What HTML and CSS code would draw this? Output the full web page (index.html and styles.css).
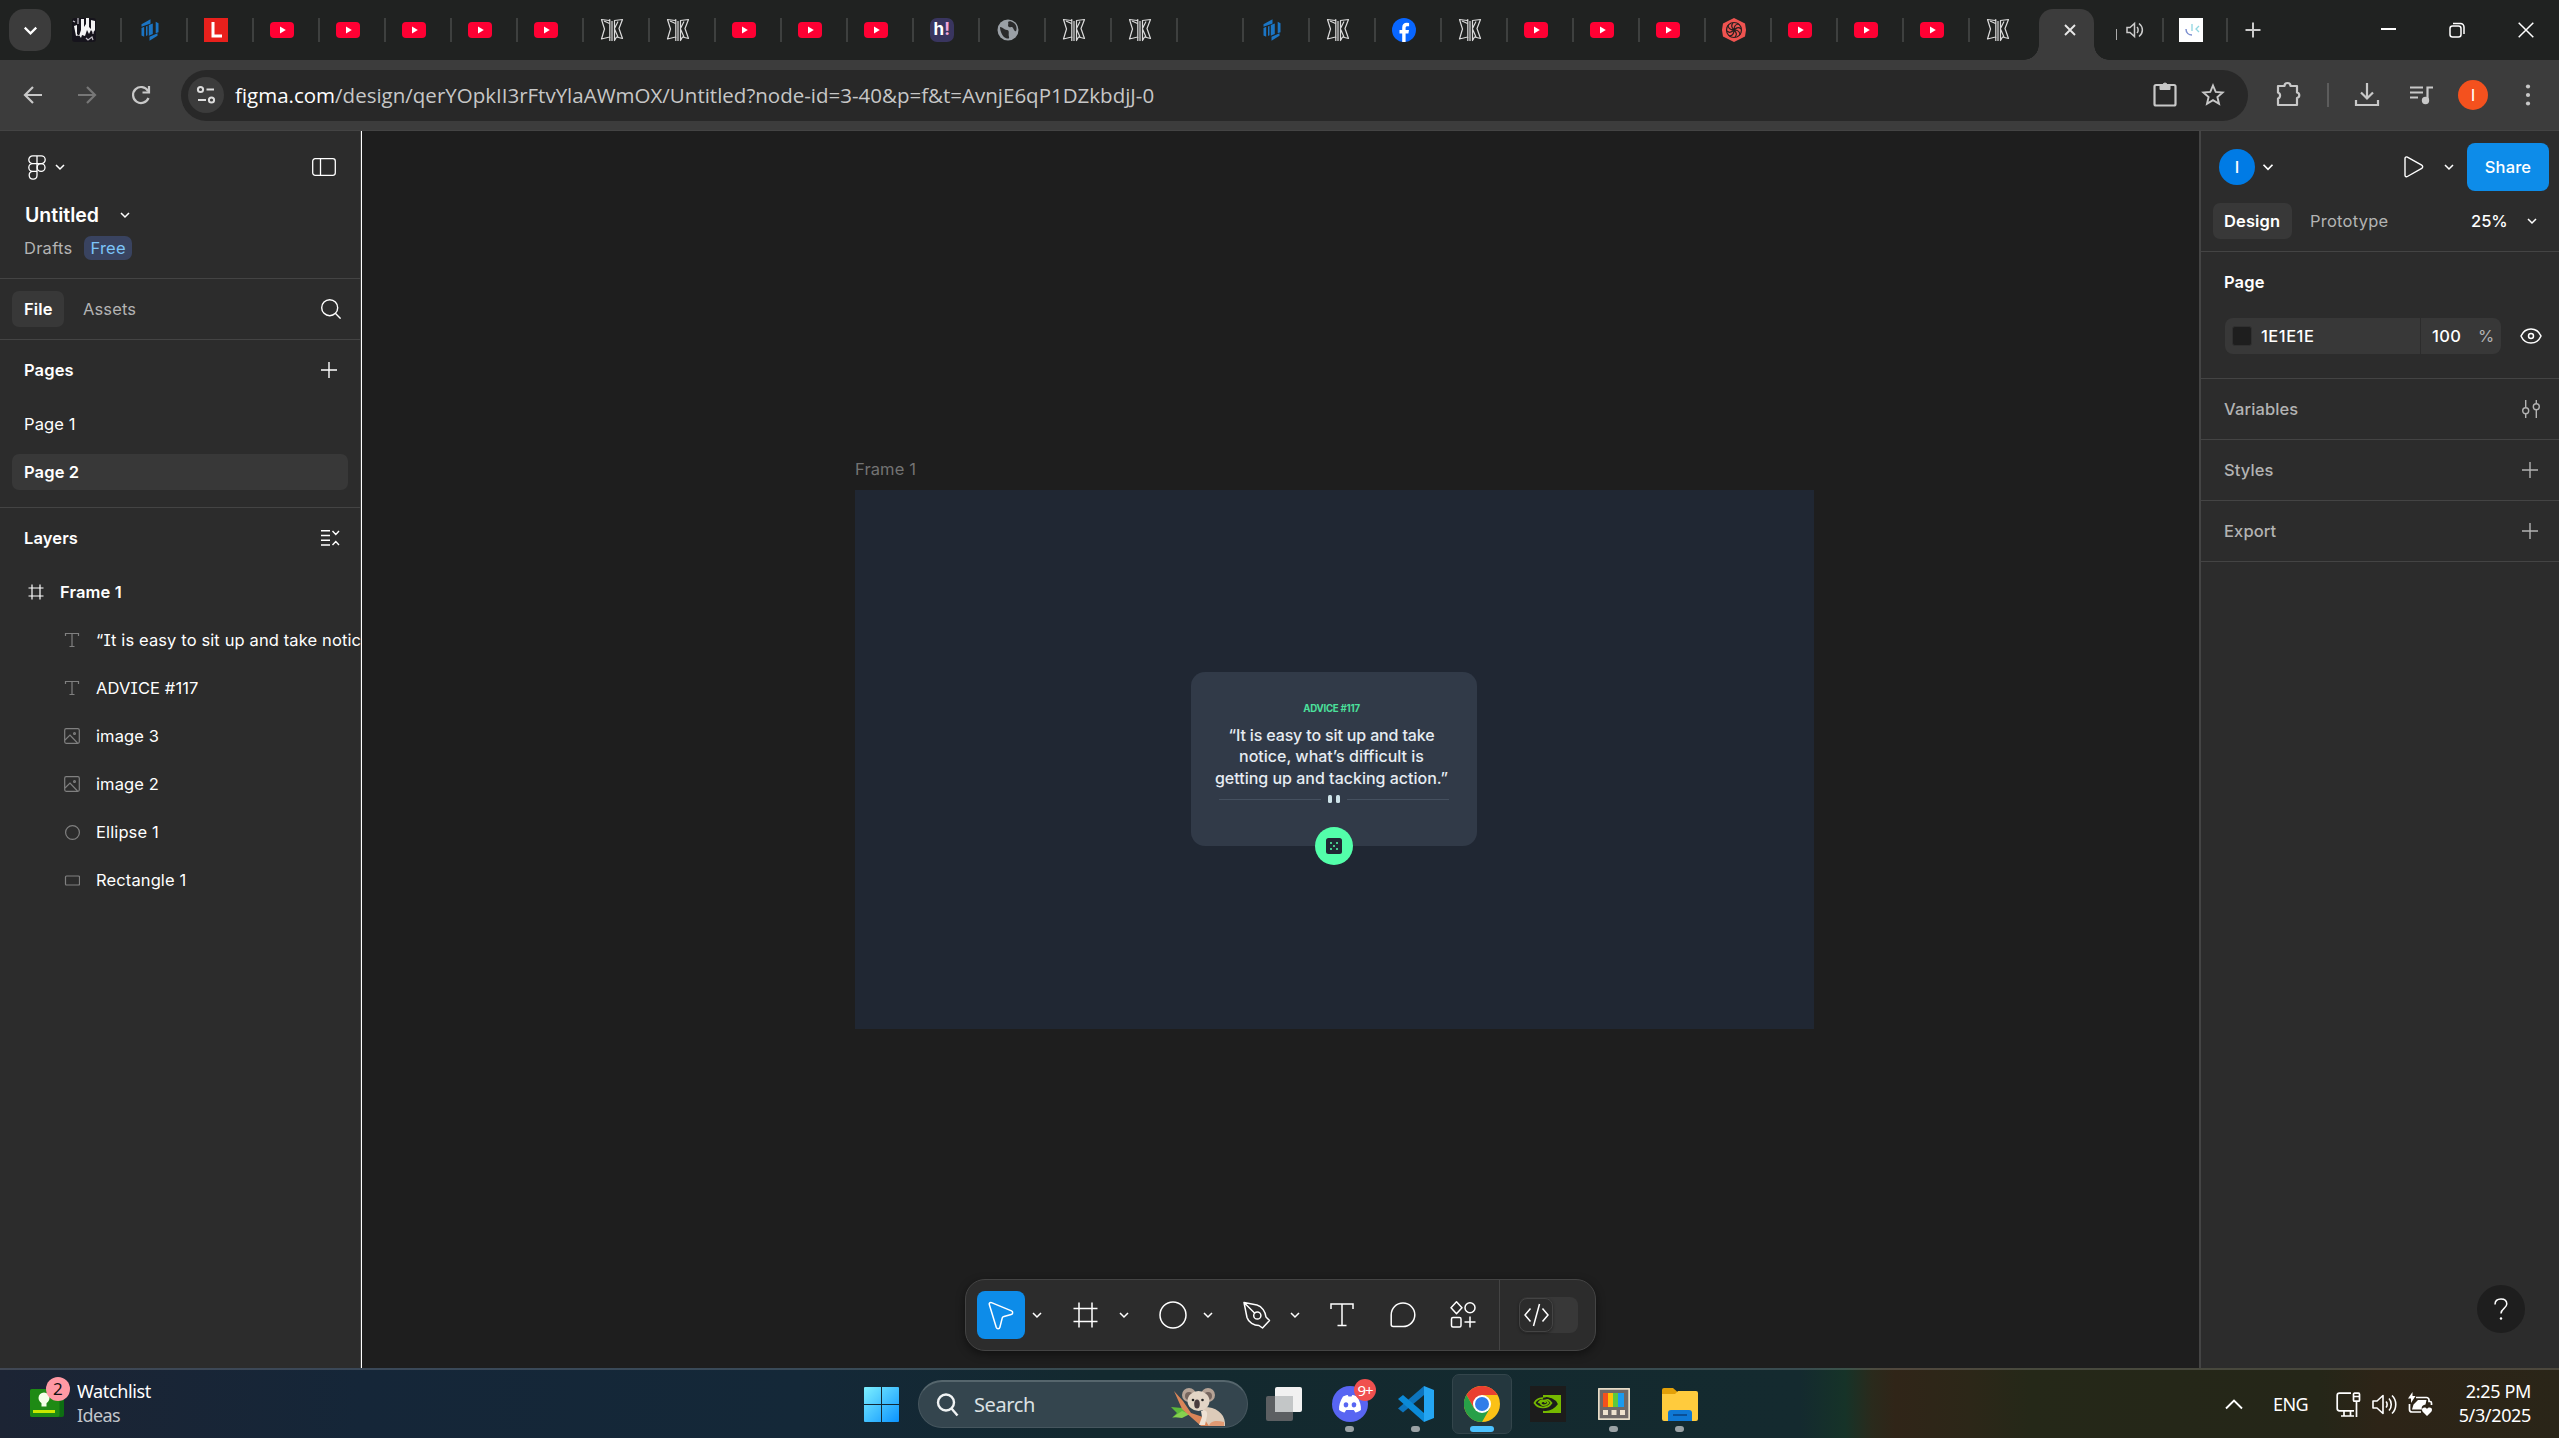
FILE: index.html
```html
<!DOCTYPE html>
<html lang="en">
<head>
<meta charset="utf-8">
<title>Untitled – Figma</title>
<link rel="stylesheet" href="styles.css">
</head>
<body>
<svg class="sprite" aria-hidden="true">
  <symbol id="yt" viewBox="0 0 24 24"><rect y="4" width="24" height="16" rx="4" fill="#ff0033"/><path d="M10 8.6v6.8l5.8-3.4z" fill="#fff"/></symbol>
  <symbol id="jk" viewBox="0 0 24 24"><g fill="none" stroke="#dcdcdc" stroke-width="1.200" stroke-linejoin="round"><path d="M1.500 1.500l7.500 1 .8-.8V19l-2.300.500-6 1.500L4.500 11z"/><path d="M14.500 10.500V2.500l8-1-3.500 9 3.500 10-6-1.500-2 3.500zM14.500 10.500l3.500-7M14.500 11l3.500 8"/><path d="M9.800 19v4M12 3v20M4 3l5.500 2.500"/></g></symbol>
  <symbol id="hex" viewBox="0 0 24 24"><g fill="#1b75c4"><path d="M3.500 10l2.700-1.200v10L3.500 17.500z"/><path d="M3.500 6.200L12.500 1.300v4.200l-9 3.300z"/><path d="M8 8.500l1.500-.8v9.500L8 18z"/><path d="M10.800 7l4-1.500v10.500l-4 1.700z"/><path d="M17.700 3.800l2.800 1.500v9l-2.800 1z"/><path d="M11.500 18.800l8-3.500v2.500l-8 5z"/></g></symbol>
  <symbol id="chev" viewBox="0 0 12 12"><path d="M3 4.500l3 3 3-3" fill="none" stroke="currentColor" stroke-width="1.150"/></symbol>
  <symbol id="plus" viewBox="0 0 18 18"><path d="M9 1v16M1 9h16" stroke="currentColor" stroke-width="1.400"/></symbol>
  <symbol id="hash" viewBox="0 0 16 16"><path d="M4 .5v15M12 .5v15M.5 4h15M.5 12h15" stroke="currentColor" fill="none" stroke-width="1.200"/></symbol>
  <symbol id="tee" viewBox="0 0 16 16"><path d="M1.500 4V1.500h13V4M8 1.500v13M5.500 14.500h5" stroke="currentColor" fill="none" stroke-width="1.200"/></symbol>
  <symbol id="image" viewBox="0 0 16 16"><g stroke="currentColor" fill="none" stroke-width="1.200"><rect x=".7" y=".7" width="14.600" height="14.600" rx="1.500"/><path d="M1 12l5-5 7.500 8"/><circle cx="10.500" cy="5.500" r=".9"/></g></symbol>
</svg>

<header class="tabstrip">
  <button class="tab-search"><svg width="23" height="23"><use href="#chev"/></svg></button>
  <div class="tabs">
    <div class="tab"><svg class="fav" viewBox="0 0 24 24"><rect width="24" height="24" rx="3" fill="#16141c"/><path d="M2 8l3-1v9l2 2 2-6V1h3v8l2-3V0h3v9l2 2V2l4 1v9l-2 3-2-3-2 4-2-4-2 6-3-1-1 3-2-3-3 1z" fill="#f4f4f4"/><path d="M1 3l2 1M6 0v6M21 13v3M14 20l2 2 4-3 1 3" stroke="#c5c0c8" stroke-width="1.200" fill="none"/></svg></div>
    <div class="tab"><svg class="fav"><use href="#hex"/></svg></div>
    <div class="tab"><svg class="fav" viewBox="0 0 24 24"><path fill="#e8201c" d="M0 0h24v24H0z"/><path d="M9 4v14h9" fill="none" stroke="#fff" stroke-width="3"/></svg></div>
    <div class="tab"><svg class="fav"><use href="#yt"/></svg></div>
    <div class="tab"><svg class="fav"><use href="#yt"/></svg></div>
    <div class="tab"><svg class="fav"><use href="#yt"/></svg></div>
    <div class="tab"><svg class="fav"><use href="#yt"/></svg></div>
    <div class="tab"><svg class="fav"><use href="#yt"/></svg></div>
    <div class="tab"><svg class="fav"><use href="#jk"/></svg></div>
    <div class="tab"><svg class="fav"><use href="#jk"/></svg></div>
    <div class="tab"><svg class="fav"><use href="#yt"/></svg></div>
    <div class="tab"><svg class="fav"><use href="#yt"/></svg></div>
    <div class="tab"><svg class="fav"><use href="#yt"/></svg></div>
    <div class="tab"><span class="fav hashnode">h<i>!</i></span></div>
    <div class="tab"><svg class="fav" viewBox="0 0 24 24"><circle cx="12" cy="12" r="10.500" fill="#9aa0a6"/><path d="M4 9c3 0 4 3 7 3s1 4 2 7-4 1-5 0-4-5-4-10zM12 4c1 2-1 4 1 5s3-1 4 1 2 4 3 3 1-6-2-8-5-2-6-1z" fill="#2a2b2c"/></svg></div>
    <div class="tab"><svg class="fav"><use href="#jk"/></svg></div>
    <div class="tab"><svg class="fav"><use href="#jk"/></svg></div>
    <div class="tab"><span class="fav"></span></div>
    <div class="tab"><svg class="fav"><use href="#hex"/></svg></div>
    <div class="tab"><svg class="fav"><use href="#jk"/></svg></div>
    <div class="tab"><svg class="fav" viewBox="0 0 24 24"><circle cx="12" cy="12" r="12" fill="#0866ff"/><path d="M10.200 24v-8.500H7.500V12h2.700V9.800c0-3.500 1.700-5 4.700-5l2.200.2v3.200h-1.500c-1.500 0-2 .6-2 2V12h3.400l-.6 3.500h-2.800V24z" fill="#fff"/></svg></div>
    <div class="tab"><svg class="fav"><use href="#jk"/></svg></div>
    <div class="tab"><svg class="fav"><use href="#yt"/></svg></div>
    <div class="tab"><svg class="fav"><use href="#yt"/></svg></div>
    <div class="tab"><svg class="fav"><use href="#yt"/></svg></div>
    <div class="tab"><svg class="fav" viewBox="0 0 24 24"><path d="M12 0l11 5.500 1 6.500-1 6.500L12 24 1 18.500 0 12l1-6.500z" fill="#ef5350"/><g fill="none" stroke="#26201f" stroke-width="1.200"><circle cx="12" cy="12" r="7.500"/><path d="M12 12c0-4 2-6 5-6M12 12c4 0 6 2 6 5M12 12c0 4-2 6-5 6M12 12c-4 0-6-2-6-5M12 12c-3-3-3-5-1-7M12 12c3-3 5-3 7-1M12 12c3 3 3 5 1 7M12 12c-3 3-5 3-7 1"/></g></svg></div>
    <div class="tab"><svg class="fav"><use href="#yt"/></svg></div>
    <div class="tab"><svg class="fav"><use href="#yt"/></svg></div>
    <div class="tab"><svg class="fav"><use href="#yt"/></svg></div>
    <div class="tab last"><svg class="fav"><use href="#jk"/></svg></div>
  </div>
  <div class="tab-active"><svg width="12" height="12" viewBox="0 0 12 12"><path d="M1 1l10 10M11 1L1 11" stroke="#e8e8e8" stroke-width="1.900"/></svg></div>
  <div class="tab-audio"><span class="sliver"></span><svg width="18" height="18" viewBox="0 0 18 18" fill="none" stroke="#ccc" stroke-width="1.500"><path d="M1 6.500h3l4.500-4v13l-4.500-4H1z"/><path d="M11 6c1.500 1.500 1.500 4.500 0 6M13 2.500c4.500 3.500 4.500 9.500 0 13"/></svg></div>
  <div class="tab-end"><svg class="fav" viewBox="0 0 24 24"><path fill="#fff" d="M0 0h24v24H0z"/><path d="M7 11c0 4 3 6 6 6" stroke="#7c8fd0" stroke-width="1.500" fill="none"/><path d="M13 6v7M20 8l-3 3 3 3" stroke="#8fd6e0" stroke-width="1.300" fill="none"/></svg></div>
  <svg class="newtab" width="18" height="18" viewBox="0 0 18 18"><path d="M9 1.500v15M1.500 9h15" stroke="#ccc" stroke-width="2"/></svg>
  <div class="wincontrols">
    <svg width="16" height="16" viewBox="0 0 16 16"><path d="M1 7h15" stroke="#fff" stroke-width="2"/></svg>
    <svg width="16" height="16" viewBox="0 0 16 16" fill="none" stroke="#fff" stroke-width="1.500"><rect x="1" y="4" width="11" height="11" rx="2.500"/><path d="M4 1.500h7.500a3.500 3.500 0 0 1 3.500 3.500V12"/></svg>
    <svg width="16" height="16" viewBox="0 0 16 16"><path d="M.7.700l14.600 14.600M15.300.700L.7 15.300" stroke="#fff" stroke-width="1.500"/></svg>
  </div>
</header>

<nav class="toolbar">
  <svg class="nav-i" viewBox="0 0 20 20"><path d="M19 10H2.500M10 2l-8 8 8 8" /></svg>
  <svg class="nav-i dim" viewBox="0 0 20 20"><path d="M1 10h16.500M10 2l8 8-8 8" /></svg>
  <svg class="nav-i" viewBox="0 0 20 20"><path d="M17.500 13A8 8 0 1 1 17 6M18 1v6.500h-6.500"/></svg>
  <div class="omnibox">
    <span class="siteinfo"><svg width="20" height="20" viewBox="0 0 20 20" fill="none" stroke="#dcdcdc" stroke-width="2"><circle cx="4.500" cy="4.500" r="2.600"/><path d="M10.500 4.500H18M2 15h8"/><circle cx="15.500" cy="15" r="2.600"/></svg></span>
    <span class="url"><b>figma.com</b>/design/qerYOpkII3rFtvYlaAWmOX/Untitled?node-id=3-40&amp;p=f&amp;t=AvnjE6qP1DZkbdjJ-0</span>
    <svg class="clip" width="24" height="26" viewBox="0 0 24 26" fill="none" stroke="#c8c8c8" stroke-width="2.200"><rect x="1.500" y="4" width="21" height="20.500" rx="1.500"/><path d="M7 4h3a2 2 0 0 1 4 0h3v4.500H7z" fill="#c8c8c8" stroke-width="1"/></svg>
    <svg width="24" height="24" viewBox="0 0 24 24" fill="none" stroke="#c8c8c8" stroke-width="1.900"><path d="M12 2.500l2.700 6.400 6.900.6-5.200 4.500 1.600 6.800-6-3.600-6 3.600 1.600-6.800-5.200-4.500 6.900-.6z"/></svg>
  </div>
  <svg class="puzzle" width="26" height="26" viewBox="0 0 26 26" fill="none" stroke="#c8c8c8" stroke-width="2.200"><path d="M2 5h6.500a3 3 0 0 1 6 0H21v6.500a2.800 2.800 0 0 1 0 5.500v7H2v-6.500a3.200 3.200 0 0 0 0-6z" stroke-linejoin="round"/></svg>
  <span class="tsep"></span>
  <svg class="dl" width="26" height="26" viewBox="0 0 26 26" fill="none" stroke="#c8c8c8" stroke-width="2.200"><path d="M13 1v15M7 10.500l6 6 6-6M2 18v5h22v-5"/></svg>
  <svg class="media" width="24" height="20" viewBox="0 0 24 20" fill="none" stroke="#c8c8c8" stroke-width="2.200"><path d="M1 2.500h13M1 7.500h13M1 12.500h8"/><path d="M18.500 16V2.500H24"/><circle cx="16.500" cy="15.500" r="2.600" fill="#c8c8c8"/></svg>
  <span class="profile">I</span>
  <svg class="dots" width="6" height="22" viewBox="0 0 6 22" fill="#c8c8c8"><circle cx="3" cy="2.500" r="2.100"/><circle cx="3" cy="11" r="2.100"/><circle cx="3" cy="19.500" r="2.100"/></svg>
</nav>

<main class="app">
  <aside class="left">
    <div class="l-top">
      <svg width="18" height="25" viewBox="0 0 18 25" fill="none" stroke="#fff" stroke-width="1.300"><path d="M9 .8H4.700a3.900 3.900 0 0 0 0 7.800H9zM9 .8h4.300a3.900 3.900 0 0 1 0 7.800H9zM9 8.600H4.700a3.900 3.900 0 0 0 0 7.800H9zM9 16.400H4.700a3.900 3.900 0 1 0 4.300 3.900z"/><circle cx="13.100" cy="12.500" r="3.900"/></svg>
      <svg class="c" width="16" height="16"><use href="#chev"/></svg>
      <svg class="push" width="24" height="18" viewBox="0 0 24 18" fill="none" stroke="#fff" stroke-width="1.300"><rect x=".7" y=".7" width="22.600" height="16.600" rx="2.500"/><path d="M8.500 1v16"/></svg>
    </div>
    <div class="l-title"><strong>Untitled</strong><svg width="16" height="16"><use href="#chev"/></svg></div>
    <div class="l-sub"><span>Drafts</span><em>Free</em></div>
    <div class="l-tabs"><span class="on">File</span><span>Assets</span>
      <svg class="push" width="20" height="20" viewBox="0 0 20 20" fill="none" stroke="#fff" stroke-width="1.400"><circle cx="8.700" cy="8.700" r="8"/><path d="M14.300 14.300l5.300 5.300"/></svg></div>
    <div class="l-head"><b>Pages</b><svg class="push" width="18" height="18"><use href="#plus"/></svg></div>
    <div class="page">Page 1</div>
    <div class="page sel">Page 2</div>
    <div class="l-head layers"><b>Layers</b><svg class="push" width="19" height="16" viewBox="0 0 19 16" fill="none" stroke="#fff" stroke-width="1.400"><path d="M0 .8h9M0 5.500h9M0 10.300h9M0 15h9M11.500 1l3.300 3.500L18 1M11.500 15l3.300-3.500L18 15"/></svg></div>
    <div class="layer top"><svg width="16" height="16"><use href="#hash"/></svg><b>Frame 1</b></div>
    <div class="layer"><svg width="16" height="16"><use href="#tee"/></svg><span>“It is easy to sit up and take notic</span></div>
    <div class="layer"><svg width="16" height="16"><use href="#tee"/></svg><span>ADVICE #117</span></div>
    <div class="layer"><svg width="16" height="16"><use href="#image"/></svg><span>image 3</span></div>
    <div class="layer"><svg width="16" height="16"><use href="#image"/></svg><span>image 2</span></div>
    <div class="layer"><svg width="16" height="16" viewBox="0 0 16 16"><circle cx="8.500" cy="8.500" r="6.900" fill="none" stroke="currentColor" stroke-width="1.200"/></svg><span>Ellipse 1</span></div>
    <div class="layer"><svg width="16" height="16" viewBox="0 0 16 16"><rect x="1.500" y="4" width="14" height="9" rx="1" fill="none" stroke="currentColor" stroke-width="1.200"/></svg><span>Rectangle 1</span></div>
  </aside>

  <section class="canvas">
    <span class="frame-label">Frame 1</span>
    <div class="frame">
      <div class="card">
        <div class="advice">ADVICE #117</div>
        <div class="quote"><span class="q1">“It is easy to sit up and take</span><span class="q2">notice, what’s difficult is</span><span class="q3">getting up and tacking action.”</span></div>
        <div class="divider"><hr><i></i><i></i><hr></div>
        <div class="dice"><svg width="16" height="16" viewBox="0 0 16 16"><rect width="16" height="16" rx="2.500" fill="#202733"/><g fill="#53ffaa"><circle cx="5" cy="5" r="1"/><circle cx="11" cy="5" r="1"/><circle cx="8" cy="8" r="1"/><circle cx="5" cy="11" r="1"/><circle cx="11" cy="11" r="1"/></g></svg></div>
      </div>
    </div>
    <div class="tools">
      <span class="tool active"><svg width="28" height="34" viewBox="0 0 28 34"><path d="M2.300 4.600c-.5-1.400.8-2.600 2.200-2l20 8.300c1.700.8 1.500 3.100-.3 3.600l-7.200 1.900c-.9.300-1.500.8-1.800 1.700l-2.300 9.100c-.5 1.900-2.900 2-3.600.3z" transform="translate(0 2)" fill="none" stroke="#fff" stroke-width="1.500"/></svg></span>
      <svg class="tc" width="16" height="16"><use href="#chev"/></svg>
      <svg class="t-frame" width="25" height="30" viewBox="0 0 25 30" fill="none" stroke="#fff" stroke-width="1.500"><path d="M6 2.500v25M19 2.500v25M.5 8.500h24M.5 21.500h24"/></svg>
      <svg class="tc" width="16" height="16"><use href="#chev"/></svg>
      <svg class="t-ell" width="28" height="28" viewBox="0 0 28 28"><circle cx="14" cy="14" r="13" fill="none" stroke="#fff" stroke-width="1.500"/></svg>
      <svg class="tc" width="16" height="16"><use href="#chev"/></svg>
      <svg class="t-pen" width="28" height="28" viewBox="0 0 28 28" fill="none" stroke="#fff" stroke-width="1.500" stroke-linejoin="round"><path d="M1 1.500l13 2.500c5 1.300 8.500 7 9 12l3.500 3.500-7 7.500-3.500-2.500c-5 0-10.500-3-12-8zM1 1.500l11 11"/><circle cx="14.300" cy="14.500" r="3.600"/></svg>
      <svg class="tc" width="16" height="16"><use href="#chev"/></svg>
      <svg class="t-text" width="24" height="24" viewBox="0 0 24 24" fill="none" stroke="#fff" stroke-width="1.500"><path d="M1 6V1h22v5M12 1v21.500M7.500 22.500h9"/></svg>
      <svg class="t-com" width="26" height="26" viewBox="0 0 26 26"><path d="M13 1a11.800 11.800 0 1 1 0 23.600H3.200A2 2 0 0 1 1.200 22.600V13A11.800 11.800 0 0 1 13 1z" fill="none" stroke="#fff" stroke-width="1.500"/></svg>
      <svg class="t-cmp" width="26" height="28" viewBox="0 0 26 28" fill="none" stroke="#fff" stroke-width="1.500"><path d="M6.500.8L12 6.700l-5.500 6L1 6.700z" stroke-linejoin="round"/><circle cx="20" cy="6.800" r="5"/><rect x="1.500" y="16.500" width="9.500" height="9.500" rx="1.500"/><path d="M20 15.500v11M14.500 21h11"/></svg>
      <span class="t-sep"></span>
      <span class="dev"><span class="knob"><svg width="25" height="24" viewBox="0 0 25 24" fill="none" stroke="#fff" stroke-width="1.500"><path d="M6.500 5.500L1 12l5.500 6.500M18.500 5.500L24 12l-5.500 6.500M15.500 1l-6 22"/></svg></span></span>
    </div>
  </section>

  <aside class="right">
    <div class="r-top"><span class="avatar">I</span><svg class="ca" width="18" height="18"><use href="#chev"/></svg>
      <svg class="play" width="20" height="22" viewBox="0 0 20 22"><path d="M1 2.500c0-1.300 1.300-2 2.400-1.400l14.300 8c1.300.8 1.300 2.400 0 3.200l-14.300 8.200C2.300 21.100 1 20.400 1 19.200z" fill="none" stroke="#fff" stroke-width="1.400"/></svg>
      <svg class="cp" width="16" height="16"><use href="#chev"/></svg><span class="share">Share</span></div>
    <div class="r-tabs"><span class="on">Design</span><span class="proto">Prototype</span><span class="zoom">25%</span><svg width="16" height="16"><use href="#chev"/></svg></div>
    <div class="r-head"><b>Page</b></div>
    <div class="r-fill"><div class="field"><i class="swatch"></i><span class="hex">1E1E1E</span><span class="op">100</span><span class="pc">%</span></div>
      <svg width="22" height="16" viewBox="0 0 22 16" fill="none" stroke="#fff" stroke-width="1.500"><path d="M1 8C3 3.500 6.500 1 11 1s8 2.500 10 7c-2 4.500-5.500 7-10 7S3 12.500 1 8z"/><circle cx="11" cy="8" r="2.500"/></svg></div>
    <div class="r-row">Variables<svg class="vars" width="18" height="18" viewBox="0 0 18 18" fill="none" stroke="currentColor" stroke-width="1.400"><path d="M3.700 0v7.500M3.700 14v4M14.300 0v3.500M14.300 10v8"/><circle cx="3.700" cy="10.800" r="3"/><circle cx="14.300" cy="6.700" r="3"/></svg></div>
    <div class="r-row">Styles<svg width="18" height="18"><use href="#plus"/></svg></div>
    <div class="r-row">Export<svg width="18" height="18"><use href="#plus"/></svg></div>
    <div class="help"><svg width="16" height="24" viewBox="0 0 16 24"><path d="M2 7.500C2 4 4.500 2 8 2s5.800 2 5.800 5c0 4.300-5.800 4.500-5.800 9.500" fill="none" stroke="#fff" stroke-width="1.500"/><circle cx="8" cy="21.500" r="1.200" fill="#fff"/></svg></div>
  </aside>
</main>

<footer class="taskbar">
  <div class="widget">
    <div class="w-icon"><svg width="34" height="28" viewBox="0 0 34 28"><rect width="34" height="28" rx="2" fill="#0d6e12"/><rect width="29.500" height="28" rx="2" fill="#1e8a14"/><path d="M3 22.500h22" stroke="#c8e800" stroke-width="3"/><circle cx="14" cy="9" r="5.500" fill="#f4ffe8"/><path d="M11.500 12h5v5.500h-5z" fill="#f4ffe8"/></svg><span class="w-badge">2</span></div>
    <div class="w-text"><span>Watchlist</span><small>Ideas</small></div>
  </div>
  <div class="apps">
    <svg class="win" width="35" height="35" viewBox="0 0 35 35"><defs><linearGradient id="wg" x2="1" y2="1"><stop stop-color="#7df0ff"/><stop offset="1" stop-color="#0a93ff"/></linearGradient></defs><path d="M1 0h16v17H0V1a1 1 0 0 1 1-1zM18 0h16a1 1 0 0 1 1 1v16H18zM0 18h17v17H1a1 1 0 0 1-1-1zM18 18h17v16a1 1 0 0 1-1 1H18z" fill="url(#wg)"/></svg>
    <div class="search"><svg width="23" height="24" viewBox="0 0 23 24" fill="none" stroke="#f0f3f4" stroke-width="2.400"><circle cx="10" cy="9.500" r="8"/><path d="M15.500 15.500l6 7"/></svg><span>Search</span>
      <svg class="koala" width="54" height="38" viewBox="0 0 54 38"><path d="M0 19l11 1 7 6-9 2-8 2 5-5z" fill="#5cb83a"/><path d="M2 29l9-6 8 3-8 4z" fill="#85d04e"/><path d="M31 19c13-1 24 6 23 19H30l4-8z" fill="#dccbb9"/><path d="M3 3l9 10 8 12 12 4 6 9h-8l-9-8-10-9z" fill="#d98558"/><circle cx="18" cy="7" r="7" fill="#b6a396"/><circle cx="37" cy="7" r="7" fill="#b6a396"/><circle cx="18" cy="8" r="4" fill="#76665f"/><circle cx="37" cy="8" r="4" fill="#76665f"/><ellipse cx="27.500" cy="13" rx="11" ry="10" fill="#e3d5c6"/><ellipse cx="26" cy="16" rx="2.800" ry="4.500" fill="#4a3c40"/><circle cx="22" cy="12" r="1.300" fill="#222"/><circle cx="31.500" cy="12" r="1.300" fill="#222"/><path d="M30 23c4-2 7 0 6 5l-2 9h-6l3-8z" fill="#eee2d4"/><path d="M38 38c1-5 7-6 15-4v4z" fill="#e29a73"/></svg></div>
    <svg class="tv" width="36" height="34" viewBox="0 0 36 34"><rect y="9" width="27" height="25" rx="2" fill="#5c5f62"/><rect x="9" width="27" height="25" rx="2" fill="#f1f1f1"/><path d="M9 9h18v16H9z" fill="#c3c6c7"/></svg>
    <div class="app discord"><svg width="36" height="36" viewBox="0 0 36 36"><circle cx="18" cy="18" r="18" fill="#5865f2"/><path d="M11 10.500c3-1.300 4-1.400 4.700-1.500l.8 1.500h3l.8-1.500c.7.100 1.700.2 4.700 1.500 3 4.500 4.300 9.500 3.900 13.500-2 1.500-4 2.400-5.500 2.600l-1.600-2.600h-7.600l-1.600 2.600c-1.500-.2-3.500-1.100-5.500-2.600-.4-4 .9-9 3.900-13.500z" fill="#fff"/><ellipse cx="14" cy="18.800" rx="2.300" ry="2.600" fill="#5865f2"/><ellipse cx="22" cy="18.800" rx="2.300" ry="2.600" fill="#5865f2"/></svg><span class="d-badge">9+</span><u></u></div>
    <div class="app vscode"><svg width="36" height="36" viewBox="0 0 36 36"><path d="M26 0l10 4v28l-10 4z" fill="#24a5f2"/><path d="M26 0v9L5 26.500l-5-4z" fill="#0d74bd"/><path d="M0 13l5-4 21 18v9z" fill="#0b8ad8"/></svg><u></u></div>
    <div class="app chrome"><svg width="36" height="36" viewBox="0 0 36 36"><circle cx="18" cy="18" r="18" fill="#fbc116"/><path d="M18 9h15.600A18 18 0 0 0 2.400 9L10 22z" fill="#ea3f30"/><path d="M2.400 9a18 18 0 0 0 15.600 27l7.800-13.500L18 18l-7.800 4.500z" fill="#27a048"/><circle cx="18" cy="18" r="9" fill="#fff"/><circle cx="18" cy="18" r="7" fill="#2f7de9"/></svg><u></u></div>
    <svg class="nv" width="36" height="36" viewBox="0 0 36 36"><path fill="#1c1c1c" d="M0 0h36v36H0z"/><path d="M13 9h18v18H13z" fill="#76b900"/><path d="M4 17c4-7 16-9 23 1-6 8-16 9-23-1z" fill="#1c1c1c"/><g fill="none" stroke="#76b900" stroke-width="1.700"><path d="M4.500 17c3-6 12-7 17 0-4 6-13 6-17 0z"/><path d="M8.500 17c2-4 8-4 10 0-3 3-7 3-8 0 1-2 4-3 5 0"/></g><path d="M13 13c7-2 12 1 14 5-3 4-8 7-14 6" fill="none" stroke="#1c1c1c" stroke-width="1.500"/></svg>
    <div class="app dev1"><svg width="32" height="32" viewBox="0 0 32 32"><rect x=".7" y=".7" width="30.600" height="30.600" rx="1" fill="#6f6967" stroke="#e6dcc8" stroke-width="2"/><path d="M5 5h6v14H5z" fill="#f4511e"/><path d="M10 5h5v14h-5z" fill="#ffc107"/><path d="M15 5h5v14h-5z" fill="#5cc93c"/><path d="M20 5h6v14h-6z" fill="#1b9bf0"/><path d="M5 22h5v5H5zM13.500 22h5v5h-5zM22 22h5v5h-5z" fill="#efe3cf"/></svg><u></u></div>
    <div class="app files"><svg width="36" height="33" viewBox="0 0 36 33"><path d="M0 2a2 2 0 0 1 2-2h9l4 3.500V9H0z" fill="#e3a008"/><path d="M0 6h13l3-3h18a2 2 0 0 1 2 2v26a2 2 0 0 1-2 2H2a2 2 0 0 1-2-2z" fill="#ffcb3d"/><path d="M6 33v-8a3 3 0 0 1 3-3h18a3 3 0 0 1 3 3v8z" fill="#0f78d4"/><path d="M11 27h14" stroke="#0a4f96" stroke-width="2"/></svg><u></u></div>
  </div>
  <div class="tray">
    <svg width="18" height="11" viewBox="0 0 18 11"><path d="M1 9.500l8-8 8 8" fill="none" stroke="#fff" stroke-width="1.900"/></svg>
    <span class="lang">ENG</span>
    <svg class="net" width="25" height="25" viewBox="0 0 25 25" fill="none" stroke="#fff" stroke-width="1.700"><path d="M15 1.200H3.500a2.300 2.300 0 0 0-2.300 2.300v13a2.300 2.300 0 0 0 2.300 2.300H18M8 19v4.500M14.500 19v4.500M5 24h13"/><rect x="17.500" y="1.200" width="6" height="8" rx="1"/><path d="M20.500 9.500V25M17.500 4.500h6"/></svg>
    <svg class="vol" width="25" height="21" viewBox="0 0 25 21" fill="none" stroke="#fff" stroke-width="1.600"><path d="M1 7h4l6-5.500v18L5 14H1z" stroke-linejoin="round"/><path d="M14 7.500c1.500 1.500 1.500 4.500 0 6M17 4.500c3 3 3 9 0 12M20 1.500c5 4.500 5 13.500 0 18"/></svg>
    <svg class="bat" width="25" height="24" viewBox="0 0 25 24"><path d="M8 5.500h10.500a2.500 2.500 0 0 1 2.500 2.500v1.500h1a1.500 1.500 0 0 1 1.500 1.500v2M1.500 12v5.500A2.500 2.500 0 0 0 4 20h9" fill="none" stroke="#fff" stroke-width="1.700"/><path d="M10 8h8.500l-1 4.500c-3 .5-4.500 2.500-3.500 5H4l1.500-5zM4.500 0v4h3L3 11V6.500H0zM19 24l-4.500-4.500c-2-3.500 2.500-5.500 4.500-2.500 2-3 6.500-1 4.500 2.500z" fill="#fff"/></svg>
    <div class="clock"><span>2:25 PM</span><span>5/3/2025</span></div>
  </div>
</footer>
</body>
</html>
```
FILE: styles.css
```css
* { box-sizing: border-box; }
body { margin: 0; width: 2559px; height: 1438px; overflow: hidden; display: flex; flex-direction: column; background: #3c3c3c; font-family: Inter, sans-serif; font-size: 16.5px; letter-spacing: 0.120px; color: #fff; }
svg { display: block; flex: none; }
.sprite { display: none; }

/* browser tabs */
.tabstrip { height: 60px; flex: none; background: #202221; display: flex; align-items: center; padding-left: 9px; color: #ccc; position: relative; }
.tab-search { width: 42px; height: 42px; border: 0; padding: 0; border-radius: 15px; background: #3c3c3c; color: #fff; display: flex; align-items: center; justify-content: center; margin-right: 5px; }
.tabs { display: flex; }
.tab { width: 66.030px; height: 24px; padding-left: 15.500px; border-right: 2px solid #3e403f; }
.tab.last { border: 0; }
.fav { width: 24px; height: 24px; display: block; }
.hashnode { background: #39355f; border-radius: 7px; font: 700 17px/23px Inter, sans-serif; letter-spacing: 0; text-align: center; color: #fff; }
.hashnode i { font-style: normal; color: #f3a6d8; }
.tab-active { width: 55px; height: 51px; align-self: flex-end; margin-left: 3px; background: #3c3c3c; border-radius: 14px 14px 0 0; display: flex; align-items: center; justify-content: center; padding: 0 0 9px 6px; position: relative; }
.tab-active::before, .tab-active::after { content: ""; position: absolute; bottom: 0; width: 15px; height: 15px; }
.tab-active::before { left: -15px; background: radial-gradient(circle at 0 0, transparent 14.500px, #3c3c3c 15px); }
.tab-active::after { right: -15px; background: radial-gradient(circle at 100% 0, transparent 14.500px, #3c3c3c 15px); }
.tab-audio { width: 70px; height: 24px; padding-left: 22px; border-right: 2px solid #3e403f; display: flex; align-items: center; }
.sliver { width: 1px; height: 11px; background: #aaa; margin: 8px 9px 0 0; }
.tab-end { width: 64px; height: 24px; padding-left: 15px; border-right: 2px solid #3e403f; }
.newtab { margin-left: 16px; }
.wincontrols { margin-left: auto; display: flex; gap: 53px; padding-right: 25px; }

/* address bar */
.toolbar { height: 70px; flex: none; background: #3c3c3c; display: flex; align-items: center; padding-left: 23px; }
.nav-i { width: 20px; height: 20px; margin-right: 34px; fill: none; stroke: #c8c8c8; stroke-width: 2.200; }
.nav-i.dim { stroke: #777; }
.omnibox { width: 2067px; height: 51px; margin-left: -4px; border-radius: 26px; background: #282828; display: flex; align-items: center; padding: 0 23px 0 7px; }
.siteinfo { width: 36px; height: 36px; border-radius: 50%; background: #3c3c3c; display: flex; align-items: center; justify-content: center; margin-right: 11px; }
.url { flex: 1; font: 20.500px/28px "Open Sans", sans-serif; letter-spacing: 0; color: #c7c7c7; white-space: nowrap; }
.url b { font-weight: 400; color: #fff; }
.clip { margin-right: 24px; margin-top: -3px; }
.puzzle { margin-left: 28px; margin-top: -3px; }
.tsep { width: 2px; height: 24px; background: #5c5c5c; margin: 0 25px; }
.media { margin: 0 25px 0 29px; }
.profile { width: 30px; height: 30px; border-radius: 50%; background: #f4511e; font: 17px/30px Roboto, sans-serif; text-align: center; }
.dots { margin-left: 37px; }

/* editor */
.app { flex: 1; min-height: 0; display: flex; border-top: 1px solid #444; background: #1e1e1e; }
.left { width: 362px; flex: none; background: #2c2c2c; border-right: 1px solid #fff; box-shadow: inset -1px 0 #444; overflow: hidden; }
.l-top { height: 72px; display: flex; align-items: center; padding: 0 25px 0 28px; }
.l-top .c { margin-left: 6px; }
.push { margin-left: auto; }
.l-title { height: 23px; display: flex; align-items: center; padding-left: 25px; font-size: 19.500px; letter-spacing: 0; }
.l-title strong { font-weight: 600; width: 92px; }
.l-sub { height: 53px; display: flex; align-items: flex-start; border-bottom: 1px solid #444; padding: 10px 0 0 24px; line-height: 24px; color: #b3b3b3; gap: 12px; letter-spacing: 0.250px; }
.l-sub em { font-style: normal; color: #7cc4f8; background: #394360; border-radius: 7px; padding: 0 6px; }
.l-tabs { height: 61px; display: flex; align-items: center; border-bottom: 1px solid #444; padding: 0 20px 0 12px; color: #b3b3b3; }
.l-tabs span { line-height: 36px; padding: 0 12px; }
.on { background: #383838; border-radius: 7px; color: #fff; font-weight: 600; }
.l-tabs span.on { margin-right: 7px; width: 52px; }
.l-head { height: 60px; display: flex; align-items: center; padding: 0 23px 0 24px; }
.l-head.layers { height: 61px; padding-right: 21px; border-top: 1px solid #444; }
b { font-weight: 600; }
.page { line-height: 36px; margin: 6px 13px 12px 12px; padding-left: 12px; border-radius: 7px; }
.page.sel { background: #383838; font-weight: 600; margin-bottom: 17px; }
.layer { height: 48px; display: flex; align-items: center; padding-left: 64px; gap: 16px; white-space: nowrap; font-feature-settings: "cv08"; }
.layer svg { color: #808080; }
.layer.top { padding-left: 28px; }
.layer.top svg { color: #fff; }

/* canvas */
.canvas { flex: 1; position: relative; }
.frame-label { position: absolute; left: 493px; top: 326px; line-height: 24px; color: #737373; }
.frame { position: absolute; left: 493px; top: 359px; width: 959px; height: 539px; background: #202733; }
.card { position: absolute; left: 336px; top: 182px; width: 286px; height: 174px; border-radius: 14px; background: #313a48; text-align: center; letter-spacing: 0; }
.advice { position: absolute; left: 0; right: 5px; top: 30px; font: 700 9.700px/14px Inter, sans-serif; letter-spacing: -0.250px; color: #4be09c; }
.quote { position: absolute; left: 0; right: 5px; top: 53px; font: 500 16px/21.300px Inter, sans-serif; color: #e6ecf2; white-space: nowrap; }
.quote span { display: block; }
.q1 { letter-spacing: -0.150px; }
.divider { position: absolute; left: 28px; right: 28px; top: 123px; height: 8px; display: flex; align-items: center; gap: 4px; }
.divider hr { flex: 1; margin: 0 3px 0 0; border: 0; height: 1px; background: #45505f; }
.divider hr:last-child { margin: 0 0 0 3px; }
.divider i { width: 4px; height: 8px; border-radius: 1.500px; background: #cee3e9; }
.dice { position: absolute; left: 124px; top: 155px; width: 38px; height: 38px; border-radius: 50%; background: #53ffaa; display: flex; align-items: center; justify-content: center; }

.tools { position: absolute; left: 603px; top: 1148px; width: 631px; height: 72px; border: 1px solid #444; border-radius: 20px; background: #2c2c2c; box-shadow: 0 3px 10px rgba(0,0,0,.45); display: flex; align-items: center; padding-left: 11px; }
.tool.active { width: 48px; height: 48px; border-radius: 8px; background: #0d8ce9; display: flex; align-items: center; justify-content: center; }
.tc { margin: 0 0 0 4px; }
.t-frame { margin: 0 14px 0 28px; }
.t-ell { margin: 0 9px 0 27px; }
.t-pen { margin: 0 12px 0 27px; }
.t-text { margin: 0 22px 0 27px; }
.t-com { margin-left: 14px; margin-right: 0; }
.t-cmp { margin: 0 23px 0 34px; }
.t-sep { width: 1px; height: 70px; background: #444; }
.dev { width: 59px; height: 36px; border-radius: 8px; background: #383838; margin-left: 19px; display: flex; align-items: center; }
.knob { width: 34px; height: 34px; border: 1px solid #444; border-radius: 8px; background: #2c2c2c; display: flex; align-items: center; justify-content: center; box-shadow: 0 1px 3px rgba(0,0,0,.4); }

/* properties */
.right { width: 360px; flex: none; background: #2c2c2c; border-left: 2px solid #444; display: flex; flex-direction: column; position: relative; }
.r-top { height: 72px; display: flex; align-items: center; padding: 0 10px 0 18px; }
.avatar { width: 36px; height: 36px; border-radius: 50%; background: #007be5; text-align: center; line-height: 36px; font-weight: 500; }
.ca { margin-left: 4px; }
.play { margin-left: auto; }
.cp { margin: 0 10px 0 17px; }
.share { width: 82px; height: 48px; border-radius: 8px; background: #0d8ce9; line-height: 48px; text-align: center; font-weight: 500; }
.r-tabs { height: 49px; display: flex; align-items: flex-start; padding: 0 19px 0 12px; line-height: 36px; border-bottom: 1px solid #444; }
.r-tabs .on { width: 79px; padding-left: 11px; }
.proto { color: #b3b3b3; margin-left: 18px; letter-spacing: 0.250px; }
.zoom { margin-left: auto; width: 53px; font-weight: 500; letter-spacing: 0; }
.r-tabs svg { margin-top: 10px; }
.r-head { height: 60px; line-height: 60px; padding-left: 23px; }
.r-fill { height: 67px; border-bottom: 1px solid #444; padding: 6px 17px 0 24px; display: flex; align-items: flex-start; }
.field { width: 276px; height: 36px; border-radius: 8px; background: #383838; display: flex; align-items: center; padding-left: 7px; line-height: 36px; font-weight: 500; }
.swatch { width: 20px; height: 20px; border-radius: 3px; background: #1e1e1e; border: 1px solid #303030; margin-right: 9px; }
.hex { width: 160px; border-right: 1px solid #2c2c2c; letter-spacing: 0.500px; }
.op { width: 45px; padding-left: 11px; letter-spacing: 0.400px; }
.pc { color: #b3b3b3; font-weight: 400; margin-left: 12px; letter-spacing: 0; }
.r-fill svg { margin: 10px 0 0 auto; }
.r-row { height: 61px; border-bottom: 1px solid #444; display: flex; align-items: center; justify-content: space-between; padding: 0 20px 0 23px; color: #b3b3b3; font-weight: 500; }
.r-row .vars { margin-right: -1px; }
.help { position: absolute; left: 276px; top: 1154px; width: 48px; height: 48px; border-radius: 50%; background: #1e1e1e; display: flex; align-items: center; justify-content: center; }

/* taskbar */
.taskbar { height: 70px; flex: none; border-top: 2px solid rgba(255,255,255,.16); background: linear-gradient(90deg, #1c2434 0, #152638 360px, #142838 800px, #13292f 1100px, #142a2f 1800px, #163328 1845px, #2a2a1c 1872px, #302518 1895px, #2c2718 1970px, #252818 2030px, #252618 2320px, #2d2417 2380px, #2a2518 2559px); background-origin: border-box; display: flex; font-family: "Noto Sans", sans-serif; }
.widget { width: 864px; flex: none; display: flex; padding-left: 30px; }
.w-icon { position: relative; width: 34px; padding-top: 19px; margin-right: 13px; }
.w-badge { position: absolute; left: 16px; top: 7px; width: 24px; height: 24px; border-radius: 50%; background: #ff99a4; color: #111; font-size: 17px; line-height: 24px; text-align: center; }
.w-text { display: flex; flex-direction: column; padding-top: 9px; font-size: 18px; line-height: 24px; letter-spacing: -0.350px; }
.w-text small { font-size: 18px; color: #c2c6cb; letter-spacing: -0.600px; }
.apps { display: flex; align-items: center; height: 68px; }
.search { width: 330px; height: 48px; margin: 0 18px 0 19px; border-radius: 24px; background: #34454e; border: 1px solid #46565e; border-top: 2px solid #56666d; display: flex; align-items: center; padding: 0 22px 0 17px; font-size: 20px; color: #dbe1e3; letter-spacing: -0.400px; }
.search span { margin-left: 15px; }
.koala { margin-left: auto; margin-top: 4px; }
.app { position: relative; }
.apps .app { flex: none; width: 60px; height: 60px; border: 1px solid transparent; background: none; border-radius: 7px; align-items: center; justify-content: center; margin-right: 6px; }
.apps .discord { margin-left: 18px; }
.apps .chrome { background: #24373e; border-color: #33454b; }
.app u { position: absolute; bottom: 1px; left: 24px; width: 9px; height: 6px; border-radius: 3px; background: #9aa2a5; }
.app.chrome u { left: 17px; width: 24px; background: #4cc2ff; }
.d-badge { position: absolute; left: 33px; top: 4px; width: 22px; height: 22px; border-radius: 50%; background: #f0504f; font-size: 15px; line-height: 22px; text-align: center; letter-spacing: -1px; }
.nv { margin: 0 18px 0 12px; }
.tray { margin-left: auto; display: flex; align-items: center; padding-right: 28px; height: 68px; }
.lang { font-size: 18px; letter-spacing: -0.600px; margin-left: 30px; }
.net { margin-left: 28px; }
.vol { margin-left: 11px; }
.bat { margin-left: 11px; }
.clock { width: 98px; display: flex; flex-direction: column; text-align: right; font-size: 18px; line-height: 24px; letter-spacing: -0.350px; margin-top: -2px; }
```
